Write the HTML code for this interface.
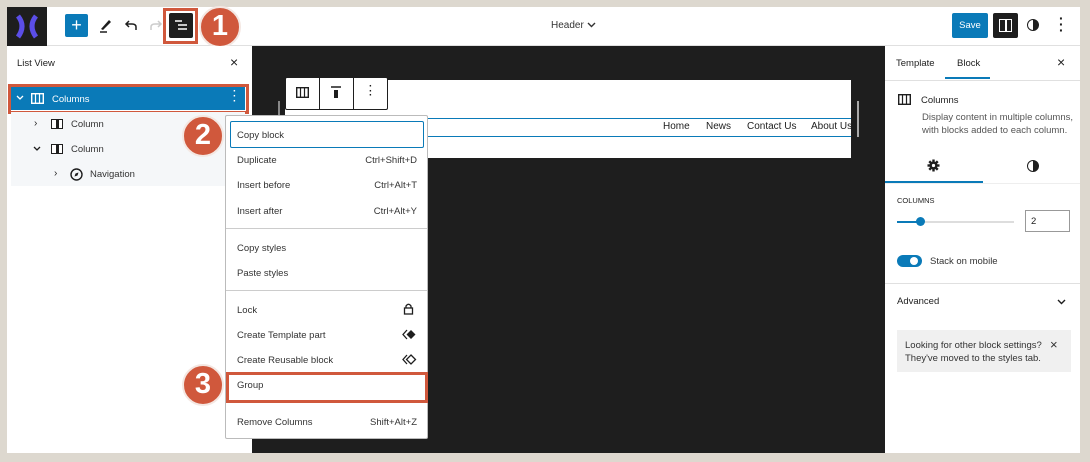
<!DOCTYPE html>
<html><head><style>
*{box-sizing:border-box;margin:0;padding:0}
body{width:1090px;height:462px;background:#ddd8cf;font-family:"Liberation Sans",sans-serif;font-size:10px;color:#1e1e1e;position:relative;overflow:hidden}
.a{position:absolute}
.t{position:absolute;white-space:nowrap}
.mi{position:absolute;left:237px;font-size:9.5px;color:#333}
.sc{position:absolute;right:673px;font-size:9.5px;color:#333}
.badge{position:absolute;width:42px;height:42px;border-radius:50%;background:#d0583c;border:2px solid #f4e7e2;color:#fff;font-weight:bold;font-size:29px;text-align:center;line-height:37px}
.red{position:absolute;border:3px solid #d0583c}
</style></head><body>
<div class="a" style="left:7px;top:7px;width:1073px;height:446px;background:#fff"></div>
<div class="a" style="left:7px;top:7px;width:1073px;height:39px;background:#fff;border-bottom:1px solid #e0e0e0"></div>
<div class="a" style="left:7px;top:7px;width:40px;height:39px;background:#1e1e1e"></div>
<svg class="a" style="left:13px;top:13px" width="28" height="27" viewBox="0 0 28 27"><path d="M5 3 Q13 13 5 24" stroke="#5b4ee8" stroke-width="5" fill="none"/><path d="M23 3 Q15 13 23 24" stroke="#5b4ee8" stroke-width="5" fill="none"/></svg>
<div class="a" style="left:65px;top:14px;width:23px;height:23px;background:#0a7ab8;border-radius:2px;color:#fff;font-size:18px;text-align:center;line-height:22px">+</div>
<svg class="a" style="left:98px;top:17px" width="16" height="16"><path d="M3 12 L11 3 L13 5 L5 13 Z" fill="#1e1e1e"/><path d="M2 15 H9" stroke="#1e1e1e" stroke-width="1.5"/></svg>
<svg class="a" style="left:123px;top:18px" width="16" height="14"><path d="M13 12 V9 Q13 6 9 6 H3 M6 3 L3 6 L6 9" stroke="#1e1e1e" stroke-width="1.5" fill="none"/></svg>
<svg class="a" style="left:148px;top:18px" width="16" height="14"><path d="M3 12 V9 Q3 6 7 6 H13 M10 3 L13 6 L10 9" stroke="#ccc" stroke-width="1.5" fill="none"/></svg>
<div class="a" style="left:169px;top:13px;width:24px;height:25px;background:#1e1e1e;border-radius:2px"></div>
<svg class="a" style="left:172px;top:17px" width="18" height="17"><path d="M3 4 H10 M6 8 H15 M6 12 H15" stroke="#fff" stroke-width="1.5"/></svg>
<div class="red" style="left:163px;top:8px;width:35px;height:36px"></div>
<div class="badge" style="left:199px;top:6px">1</div>
<div class="t" style="left:551px;top:20px;font-size:10px;color:#333">Header</div>
<svg class="a" style="left:587px;top:22px" width="9" height="6"><path d="M1 1 L4.5 4.5 L8 1" stroke="#333" stroke-width="1.4" fill="none"/></svg>
<div class="a" style="left:952px;top:13px;width:36px;height:25px;background:#0a7ab8;border-radius:2px;color:#fff;font-size:9.5px;text-align:center;line-height:25px">Save</div>
<div class="a" style="left:993px;top:13px;width:25px;height:25px;background:#1e1e1e;border-radius:2px"></div>
<div class="a" style="left:999px;top:19px;width:13px;height:13px;border:1.5px solid #fff"></div>
<div class="a" style="left:1005px;top:19px;width:1.5px;height:13px;background:#fff"></div>
<div class="a" style="left:1027px;top:19px;width:12px;height:12px;border:1.5px solid #1e1e1e;border-radius:50%;background:linear-gradient(90deg,#fff 50%,#1e1e1e 50%)"></div>
<div class="t" style="left:1059px;top:15px;font-size:14px;font-weight:bold;line-height:6px">·<br>·<br>·</div>
<div class="a" style="left:7px;top:46px;width:245px;height:407px;background:#fff"></div>
<div class="t" style="left:17px;top:58px;font-size:9.5px">List View</div>
<div class="t" style="left:230px;top:54px;font-size:14px">×</div>
<div class="a" style="left:11px;top:87px;width:234px;height:23px;background:#0a7ab8"></div>
<div class="red" style="left:8px;top:84px;width:241px;height:30px"></div>
<svg class="a" style="left:16px;top:95px" width="8" height="6"><path d="M1 1 L4 4 L7 1" stroke="#fff" stroke-width="1.3" fill="none"/></svg>
<svg class="a" style="left:31px;top:93px" width="13" height="11"><rect x="0.7" y="0.7" width="11.6" height="9.6" stroke="#fff" stroke-width="1.4" fill="none"/><path d="M4.5 1 V10 M8.5 1 V10" stroke="#fff" stroke-width="1.2"/></svg>
<div class="t" style="left:52px;top:94px;color:#fff;font-size:9.5px">Columns</div>
<div class="t" style="left:233px;top:89px;color:#fff;font-size:10px;line-height:5px;font-weight:bold">·<br>·<br>·</div>
<div class="a" style="left:11px;top:112px;width:234px;height:74px;background:#f5f7f9"></div>
<div class="t" style="left:34px;top:118px;font-size:10px">›</div>
<div class="a" style="left:51px;top:119px;width:12px;height:10px;border:1.5px solid #1e1e1e;background:linear-gradient(90deg,#fff 40%,#1e1e1e 40%,#1e1e1e 70%,#fff 70%)"></div>
<div class="t" style="left:71px;top:119px;font-size:9.5px;color:#333">Column</div>
<svg class="a" style="left:33px;top:146px" width="8" height="6"><path d="M1 1 L4 4 L7 1" stroke="#1e1e1e" stroke-width="1.3" fill="none"/></svg>
<div class="a" style="left:51px;top:144px;width:12px;height:10px;border:1.5px solid #1e1e1e;background:linear-gradient(90deg,#fff 40%,#1e1e1e 40%,#1e1e1e 70%,#fff 70%)"></div>
<div class="t" style="left:71px;top:144px;font-size:9.5px;color:#333">Column</div>
<div class="t" style="left:54px;top:168px;font-size:10px">›</div>
<svg class="a" style="left:70px;top:168px" width="13" height="13"><circle cx="6.5" cy="6.5" r="5.5" stroke="#1e1e1e" stroke-width="1.4" fill="none"/><path d="M4.5 8.5 L5.5 5.5 L8.5 4.5 L7.5 7.5 Z" fill="#1e1e1e"/></svg>
<div class="t" style="left:90px;top:169px;font-size:9.5px;color:#333">Navigation</div>
<div class="badge" style="left:182px;top:115px">2</div>
<div class="a" style="left:252px;top:46px;width:633px;height:407px;background:#1e1e1e"></div>
<div class="a" style="left:285px;top:80px;width:566px;height:78px;background:#fff"></div>
<div class="a" style="left:278px;top:101px;width:2px;height:35px;background:#888"></div>
<div class="a" style="left:857px;top:101px;width:2px;height:36px;background:#aaa"></div>
<div class="a" style="left:420px;top:118px;width:431px;height:19px;border:1.5px solid #0a7ab8;border-right:none"></div>
<div class="t" style="left:663px;top:121px;font-size:10px">Home</div>
<div class="t" style="left:706px;top:121px;font-size:10px">News</div>
<div class="t" style="left:747px;top:121px;font-size:10px">Contact Us</div>
<div class="t" style="left:811px;top:121px;font-size:10px;width:40px;overflow:hidden">About Us</div>
<div class="a" style="left:285px;top:77px;width:103px;height:33px;background:#fff;border:1px solid #1e1e1e;border-radius:2px"></div>
<div class="a" style="left:319px;top:77px;width:1px;height:33px;background:#1e1e1e"></div>
<div class="a" style="left:353px;top:77px;width:1px;height:33px;background:#1e1e1e"></div>
<svg class="a" style="left:296px;top:87px" width="13" height="11"><rect x="0.7" y="0.7" width="11.6" height="9.6" stroke="#1e1e1e" stroke-width="1.4" fill="none"/><path d="M4.5 1 V10 M8.5 1 V10" stroke="#1e1e1e" stroke-width="1.2"/></svg>
<svg class="a" style="left:330px;top:86px" width="12" height="13"><path d="M1 1 H11" stroke="#1e1e1e" stroke-width="1.5"/><rect x="4" y="4" width="4" height="8" fill="#1e1e1e"/></svg>
<div class="t" style="left:369px;top:85px;font-size:10px;line-height:4.5px;font-weight:bold">·<br>·<br>·</div>
<div class="a" style="left:225px;top:115px;width:203px;height:324px;background:#fff;border:1px solid #bbb;border-radius:2px"></div>
<div class="a" style="left:230px;top:121px;width:194px;height:27px;border:1.5px solid #0a7ab8;border-radius:2px"></div>
<div class="mi" style="top:130px">Copy block</div>
<div class="mi" style="top:155px">Duplicate</div><div class="sc" style="top:155px">Ctrl+Shift+D</div>
<div class="mi" style="top:180px">Insert before</div><div class="sc" style="top:180px">Ctrl+Alt+T</div>
<div class="mi" style="top:206px">Insert after</div><div class="sc" style="top:206px">Ctrl+Alt+Y</div>
<div class="a" style="left:226px;top:228px;width:201px;height:1px;background:#ccc"></div>
<div class="mi" style="top:243px">Copy styles</div>
<div class="mi" style="top:268px">Paste styles</div>
<div class="a" style="left:226px;top:290px;width:201px;height:1px;background:#ccc"></div>
<div class="mi" style="top:305px">Lock</div>
<svg class="a" style="left:403px;top:302px" width="11" height="13"><path d="M3 6 V4 Q5.5 0.5 8 4 V6" stroke="#1e1e1e" stroke-width="1.3" fill="none"/><rect x="1.5" y="6" width="8" height="6" stroke="#1e1e1e" stroke-width="1.3" fill="none"/></svg>
<div class="mi" style="top:330px">Create Template part</div>
<svg class="a" style="left:402px;top:329px" width="15" height="11"><path d="M5 1 L1 5.5 L5 10" stroke="#1e1e1e" stroke-width="1.3" fill="none"/><path d="M9 1 L13.5 5.5 L9 10 L4.5 5.5 Z" fill="#1e1e1e"/></svg>
<div class="mi" style="top:355px">Create Reusable block</div>
<svg class="a" style="left:402px;top:354px" width="15" height="11"><path d="M5 1 L1 5.5 L5 10" stroke="#1e1e1e" stroke-width="1.3" fill="none"/><path d="M9 1 L13.5 5.5 L9 10 L4.5 5.5 Z" stroke="#1e1e1e" stroke-width="1.3" fill="none"/></svg>
<div class="mi" style="top:380px">Group</div>
<div class="red" style="left:226px;top:372px;width:202px;height:31px"></div>
<div class="mi" style="top:417px">Remove Columns</div><div class="sc" style="top:417px">Shift+Alt+Z</div>
<div class="badge" style="left:182px;top:364px">3</div>
<div class="a" style="left:885px;top:46px;width:195px;height:407px;background:#fff"></div>
<div class="t" style="left:896px;top:58px;font-size:9.5px">Template</div>
<div class="t" style="left:957px;top:58px;font-size:9.5px">Block</div>
<div class="a" style="left:945px;top:77px;width:45px;height:2px;background:#0a7ab8"></div>
<div class="t" style="left:1057px;top:54px;font-size:14px">×</div>
<div class="a" style="left:885px;top:80px;width:195px;height:1px;background:#e0e0e0"></div>
<svg class="a" style="left:898px;top:94px" width="13" height="11"><rect x="0.7" y="0.7" width="11.6" height="9.6" stroke="#1e1e1e" stroke-width="1.4" fill="none"/><path d="M4.5 1 V10 M8.5 1 V10" stroke="#1e1e1e" stroke-width="1.2"/></svg>
<div class="t" style="left:921px;top:95px;font-size:9.5px">Columns</div>
<div class="t" style="left:922px;top:111px;font-size:9.5px;color:#555;line-height:13px">Display content in multiple columns,<br>with blocks added to each column.</div>
<svg class="a" style="left:927px;top:159px" width="13" height="13" viewBox="0 0 13 13"><g fill="#1e1e1e"><circle cx="6.5" cy="6.5" r="4"/><rect x="5.3" y="0.5" width="2.4" height="12"/><rect x="0.5" y="5.3" width="12" height="2.4"/><rect x="5.3" y="0.5" width="2.4" height="12" transform="rotate(45 6.5 6.5)"/><rect x="5.3" y="0.5" width="2.4" height="12" transform="rotate(-45 6.5 6.5)"/></g><circle cx="6.5" cy="6.5" r="1.6" fill="#fff"/></svg>
<div class="a" style="left:1027px;top:160px;width:12px;height:12px;border:1.5px solid #1e1e1e;border-radius:50%;background:linear-gradient(90deg,#fff 50%,#1e1e1e 50%)"></div>
<div class="a" style="left:885px;top:181px;width:98px;height:2px;background:#0a7ab8"></div>
<div class="a" style="left:885px;top:183px;width:195px;height:1px;background:#eee"></div>
<div class="t" style="left:897px;top:196px;font-size:7.5px">COLUMNS</div>
<div class="a" style="left:897px;top:221px;width:117px;height:2px;background:#ddd"></div>
<div class="a" style="left:897px;top:221px;width:24px;height:2px;background:#0a7ab8"></div>
<div class="a" style="left:916px;top:217px;width:9px;height:9px;border-radius:50%;background:#0a7ab8"></div>
<div class="a" style="left:1025px;top:210px;width:45px;height:22px;border:1px solid #999"></div>
<div class="t" style="left:1031px;top:216px;font-size:9.5px">2</div>
<div class="a" style="left:897px;top:255px;width:25px;height:12px;border-radius:6px;background:#0a7ab8"></div>
<div class="a" style="left:910px;top:257px;width:8px;height:8px;border-radius:50%;background:#fff"></div>
<div class="t" style="left:930px;top:256px;font-size:9.5px;color:#333">Stack on mobile</div>
<div class="a" style="left:885px;top:283px;width:195px;height:1px;background:#e0e0e0"></div>
<div class="t" style="left:897px;top:296px;font-size:9.5px">Advanced</div>
<svg class="a" style="left:1057px;top:299px" width="9" height="6"><path d="M1 1 L4.5 4.5 L8 1" stroke="#1e1e1e" stroke-width="1.4" fill="none"/></svg>
<div class="a" style="left:897px;top:330px;width:174px;height:42px;background:#f0f0f0"></div>
<div class="t" style="left:905px;top:339px;font-size:9.5px;color:#333;line-height:13px">Looking for other block settings?<br>They've moved to the styles tab.</div>
<div class="t" style="left:1050px;top:337px;font-size:13px;color:#333">×</div>
</body></html>
